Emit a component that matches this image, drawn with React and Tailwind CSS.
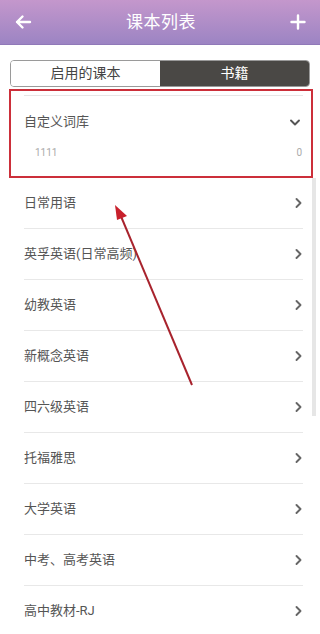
import React from "react";

const items = [
  "日常用语",
  "英孚英语(日常高频)",
  "幼教英语",
  "新概念英语",
  "四六级英语",
  "托福雅思",
  "大学英语",
  "中考、高考英语",
  "高中教材-RJ",
];

function ChevronRight() {
  return (
    <svg width="9" height="12" viewBox="0 0 9 12" className="shrink-0">
      <path d="M2.5 2 L6.5 6 L2.5 10" fill="none" stroke="#666" strokeWidth="1.9" strokeLinecap="round" strokeLinejoin="round" />
    </svg>
  );
}

function ChevronDown() {
  return (
    <svg width="12" height="9" viewBox="0 0 12 9" className="shrink-0">
      <path d="M2 2.5 L6 6.5 L10 2.5" fill="none" stroke="#555" strokeWidth="1.9" strokeLinecap="round" strokeLinejoin="round" />
    </svg>
  );
}

export default function App() {
  return (
    <div
      className="relative w-[320px] h-[634px] overflow-hidden bg-white"
      style={{ fontFamily: 'Roboto, "Noto Sans CJK SC", sans-serif' }}
    >
      {/* Header */}
      <div className="h-[45px] flex items-center justify-between px-[14px] bg-gradient-to-b from-[#c497cc] to-[#9c84c3] border-b border-[#9079b8]">
        <svg width="18" height="16" viewBox="0 0 18 16">
          <path d="M16 8 H3 M8.5 2.5 L3 8 L8.5 13.5" fill="none" stroke="#fff" strokeWidth="2.4" strokeLinecap="round" strokeLinejoin="round" />
        </svg>
        <div className="text-white text-[17px] leading-none tracking-[0.5px]">课本列表</div>
        <svg width="16" height="16" viewBox="0 0 16 16">
          <path d="M8 1.5 V14.5 M1.5 8 H14.5" fill="none" stroke="#fff" strokeWidth="2.4" strokeLinecap="round" />
        </svg>
      </div>

      {/* Tabs */}
      <div className="mt-[15px] mx-[10px] h-[27px] flex rounded-[4px] overflow-hidden border border-[#9a9a9a]">
        <div className="flex-1 flex items-center justify-center bg-white text-[14px] text-[#444]">启用的课本</div>
        <div className="flex-1 flex items-center justify-center bg-[#4a4845] text-[14px] text-white">书籍</div>
      </div>

      {/* Expanded custom vocab box */}
      <div className="mt-[2px] ml-[9px] w-[304px] h-[89px] border-2 border-[#cc2f3a] pt-[4px]">
        <div className="ml-[13px] mr-[8px] border-t border-[#e6e6e6]" />
        <div className="ml-[13px] mr-[10px] h-[52px] flex items-center justify-between">
          <span className="text-[13px] text-[#555]">自定义词库</span>
          <ChevronDown />
        </div>
        <div className="ml-[24px] mr-[9px] flex items-center justify-between text-[10px] text-[#aaa] leading-none">
          <span>1111</span>
          <span>0</span>
        </div>
      </div>

      {/* List */}
      <div className="flex flex-col">
        {items.map((t, i) => (
          <div key={i} className="ml-[24px] mr-[17px] h-[51px] flex items-center justify-between border-b border-[#e8e8e8]">
            <span className="text-[13px] text-[#555]">{t}</span>
            <ChevronRight />
          </div>
        ))}
      </div>

      {/* scrollbar */}
      <div className="absolute left-[312px] top-[178px] w-[4px] h-[238px] bg-[#e6e6e6]" />

      {/* annotation arrow */}
      <svg className="absolute left-0 top-0 pointer-events-none" width="320" height="634" viewBox="0 0 320 634">
        <line x1="192" y1="385" x2="120" y2="214" stroke="#a8232d" strokeWidth="2" />
        <polygon points="115,205 127,216 117,220" fill="#c8202c" />
      </svg>
    </div>
  );
}
